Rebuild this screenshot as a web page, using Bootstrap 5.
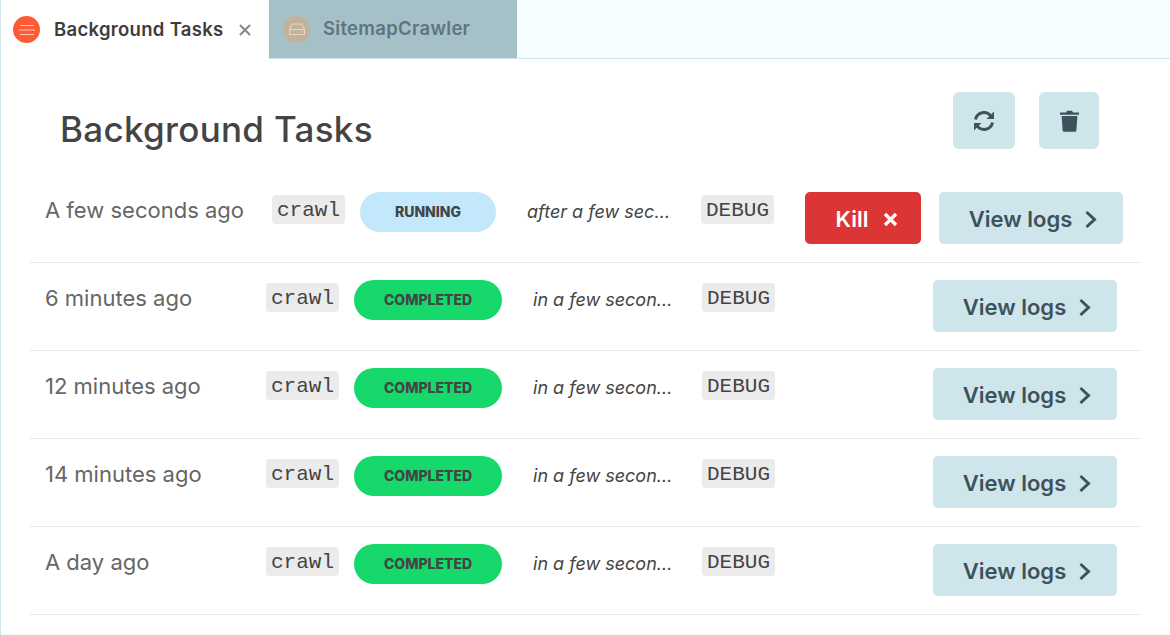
<!DOCTYPE html>
<html lang="en"><head><meta charset="utf-8"><title>Background Tasks</title>
<link rel="stylesheet" href="https://cdn.jsdelivr.net/npm/bootstrap@5.3.0/dist/css/bootstrap.min.css">
<style>
html,body{height:635px;overflow:hidden}
body{font-family:Inter,"Noto Sans",sans-serif;background:#fff;color:#444;border-left:1px solid #cfe5ec}
.tabbar{height:59px;background:#f5fdfe;border-bottom:1px solid #cfe5ec}
.tabitem{height:58px;font-size:18.5px;font-weight:600;letter-spacing:.3px}
.tab-on{width:268px;background:#fff;padding-left:12px;color:#3d3d3d;margin-bottom:-1px;height:59px}
.tab-off{width:248px;background:#a6c0c8;padding-left:14px;color:#5e757f}
.tabdot{width:27px;height:27px;border-radius:50%;flex:none}
.tablabel{margin-left:14px}
.tab-off .tablabel{margin-left:13px}
.tabclose{color:#888;margin-left:16px;line-height:0}
.headrow{height:115px;padding:33px 71px 0 59px}
.pagetitle{font-size:35px;font-weight:500;color:#444;margin:0;letter-spacing:.3px;line-height:1.2;padding-top:16px}
.toolbtn{height:57px;background:#cfe5ec;border:0;border-radius:6px}
.w62{width:62px}.w60{width:60px}
.taskrows{margin:0 29px 0 29px}
.taskrow{height:88px;border-bottom:1px solid #e8e8e8;padding-left:15px;padding-top:17px}
.taskrow.first{padding-top:18px;height:89px}
.when{font-size:22px;color:#666;font-weight:400;line-height:36px}
.codechip{font-family:"Liberation Mono",monospace;font-size:21px;background:#ebebeb;color:#444;border-radius:4px;padding:0 5px;line-height:31px;height:29px;margin-top:3px}
.statuschip{height:40px;border-radius:20px;font-size:14px;font-weight:800;color:#444;padding-bottom:2px}
.st-run{background:#c3e8fb;width:136px}
.st-done{background:#17d86b;width:148px}
.rel{font-style:italic;font-size:18px;color:#444;white-space:nowrap;overflow:hidden;text-overflow:ellipsis;line-height:40px}
.actbtn{height:52px;border:0;border-radius:5px;font-size:22px;font-weight:600;padding:2px 0 0 4px}
.act-kill{background:#dc3535;color:#fff;width:116px;padding-left:7px}
.act-view{background:#cfe5ec;color:#3d525b;width:184px}
.gapk{margin-left:14px}.gapv{margin-left:12px}
.t1{width:227px}.t2{width:221px}
.m15{margin-left:15px}
.r1a{width:145px;margin-left:31px}.r1b{margin-left:29px}.r1c{margin-left:31px}.r1d{margin-left:18px}
.r2a{width:142px;margin-left:31px}.r2b{margin-left:27px}.r2c{margin-left:auto;margin-right:24px}
</style></head><body>
<div class="tabbar d-flex align-items-start">
 <div class="tabitem tab-on d-flex align-items-center">
  <span class="tabdot d-flex align-items-center justify-content-center" style="background:#ff5a36"><svg width="16" height="12" viewBox="0 0 16 12" fill="none" stroke="#ffc9b8" stroke-width="1.2"><path d="M1 1.5h14M0 6h16M1 10.5h14"/></svg></span>
  <span class="tablabel">Background Tasks</span>
  <span class="tabclose"><svg width="12" height="12" viewBox="0 0 13 13" stroke="#888" stroke-width="2.2"><path d="M1 1l11 11M12 1L1 12"/></svg></span>
 </div>
 <div class="tabitem tab-off d-flex align-items-center">
  <span class="tabdot d-flex align-items-center justify-content-center" style="background:#c3b29a"><svg width="16" height="13" viewBox="0 0 16 13" fill="none" stroke="#e2d6c5" stroke-width="1.1"><path d="M3.5 1h9L15.5 6.5v5h-15v-5zM.5 6.5h15M12 9h1.5"/></svg></span>
  <span class="tablabel">SitemapCrawler</span>
 </div>
</div>
<div class="headrow d-flex justify-content-between align-items-start">
 <h1 class="pagetitle">Background Tasks</h1>
 <div class="d-flex" style="gap:24px">
  <button class="toolbtn w62 d-flex align-items-center justify-content-center" aria-label="Refresh"><svg width="22" height="22" viewBox="0 0 22 22" fill="none" stroke="#3d525b" stroke-width="3"><path d="M2.5 9.5A8.5 8.5 0 0 1 18 6.5"/><path d="M19.5 12.5A8.5 8.5 0 0 1 4 15.5"/><path d="M21 1.5V9h-7.5z" fill="#3d525b" stroke="none"/><path d="M1 20.5V13h7.5z" fill="#3d525b" stroke="none"/></svg></button>
  <button class="toolbtn w60 d-flex align-items-center justify-content-center" aria-label="Delete"><svg width="19" height="22" viewBox="0 0 19 22" fill="#3d525b"><path d="M0 2.6h6L7 .8h5l1 1.8h6v2.2H0zM1.6 6h15.8l-1 14.2a1.7 1.7 0 0 1-1.7 1.6H4.3a1.7 1.7 0 0 1-1.7-1.6z"/></svg></button>
 </div>
</div>
<div class="taskrows">
 <div class="taskrow first d-flex align-items-start">
  <div class="when t1">A few seconds ago</div>
  <code class="codechip">crawl</code>
  <div class="statuschip st-run m15 d-flex align-items-center justify-content-center">RUNNING</div>
  <div class="rel r1a">after a few seconds</div>
  <code class="codechip r1b">DEBUG</code>
  <button class="actbtn act-kill r1c d-flex align-items-center justify-content-center"><span>Kill</span><svg class="gapk" width="15" height="15" viewBox="0 0 15 15" stroke="#fff" stroke-width="3.4"><path d="M2 2l11 11M13 2L2 13"/></svg></button>
  <button class="actbtn act-view r1d d-flex align-items-center justify-content-center"><span>View logs</span><svg class="gapv" width="13" height="19" viewBox="0 0 13 19" fill="none" stroke="#3d525b" stroke-width="3"><path d="M2.5 2l8 7.5-8 7.5"/></svg></button>
 </div>
 <div class="taskrow d-flex align-items-start">
  <div class="when t2">6 minutes ago</div>
  <code class="codechip">crawl</code>
  <div class="statuschip st-done m15 d-flex align-items-center justify-content-center">COMPLETED</div>
  <div class="rel r2a">in a few seconds</div>
  <code class="codechip r2b">DEBUG</code>
  <button class="actbtn act-view r2c d-flex align-items-center justify-content-center"><span>View logs</span><svg class="gapv" width="13" height="19" viewBox="0 0 13 19" fill="none" stroke="#3d525b" stroke-width="3"><path d="M2.5 2l8 7.5-8 7.5"/></svg></button>
 </div>
 <div class="taskrow d-flex align-items-start">
  <div class="when t2">12 minutes ago</div>
  <code class="codechip">crawl</code>
  <div class="statuschip st-done m15 d-flex align-items-center justify-content-center">COMPLETED</div>
  <div class="rel r2a">in a few seconds</div>
  <code class="codechip r2b">DEBUG</code>
  <button class="actbtn act-view r2c d-flex align-items-center justify-content-center"><span>View logs</span><svg class="gapv" width="13" height="19" viewBox="0 0 13 19" fill="none" stroke="#3d525b" stroke-width="3"><path d="M2.5 2l8 7.5-8 7.5"/></svg></button>
 </div>
 <div class="taskrow d-flex align-items-start">
  <div class="when t2">14 minutes ago</div>
  <code class="codechip">crawl</code>
  <div class="statuschip st-done m15 d-flex align-items-center justify-content-center">COMPLETED</div>
  <div class="rel r2a">in a few seconds</div>
  <code class="codechip r2b">DEBUG</code>
  <button class="actbtn act-view r2c d-flex align-items-center justify-content-center"><span>View logs</span><svg class="gapv" width="13" height="19" viewBox="0 0 13 19" fill="none" stroke="#3d525b" stroke-width="3"><path d="M2.5 2l8 7.5-8 7.5"/></svg></button>
 </div>
 <div class="taskrow d-flex align-items-start">
  <div class="when t2">A day ago</div>
  <code class="codechip">crawl</code>
  <div class="statuschip st-done m15 d-flex align-items-center justify-content-center">COMPLETED</div>
  <div class="rel r2a">in a few seconds</div>
  <code class="codechip r2b">DEBUG</code>
  <button class="actbtn act-view r2c d-flex align-items-center justify-content-center"><span>View logs</span><svg class="gapv" width="13" height="19" viewBox="0 0 13 19" fill="none" stroke="#3d525b" stroke-width="3"><path d="M2.5 2l8 7.5-8 7.5"/></svg></button>
 </div>
</div>
</body></html>
